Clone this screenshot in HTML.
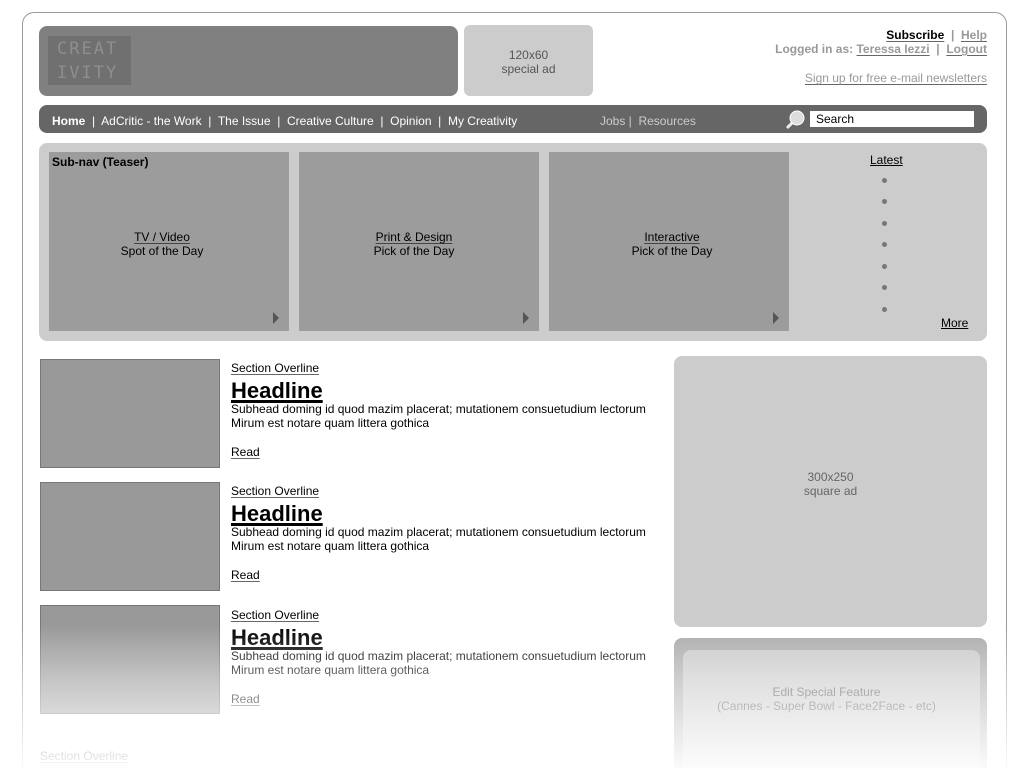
<!DOCTYPE html>
<html><head><meta charset="utf-8"><style>
*{margin:0;padding:0;box-sizing:border-box}
html,body{width:1024px;height:768px;overflow:hidden}
body{background:#fff;font-family:"Liberation Sans",Arial,sans-serif;font-size:12px;color:#000;position:relative}
.a{position:absolute}
.u{text-decoration:underline;text-decoration-color:#666;text-underline-offset:2px}
.frame{left:22px;top:12px;width:985px;height:756px;border:1px solid #999;border-bottom:none;border-radius:12px 12px 0 0}
.logo{left:39px;top:26px;width:419px;height:70px;background:#808080;border-radius:8px}
.logoin{left:48px;top:36px;width:83px;height:49px;background:#707070;font-family:"DejaVu Sans Mono",monospace;color:#8e8e8e;font-size:17px;letter-spacing:2px;line-height:24px;padding:1px 0 0 9px;font-weight:200}
.ad{left:464px;top:25px;width:129px;height:71px;background:#ccc;border-radius:6px;text-align:center;color:#555;padding-top:23px;line-height:14px}
.nav{left:39px;top:105px;width:948px;height:28px;background:#666;border-radius:8px;color:#fff}
.tile{top:152px;width:240px;height:179px;background:#9c9c9c;text-align:center;padding-top:78px;padding-right:14px;line-height:14px}
.tile .u{text-decoration-color:#444}
.arr{position:absolute;right:10px;bottom:7px;width:0;height:0;border-left:6px solid #555;border-top:6px solid transparent;border-bottom:6px solid transparent}
.dot{left:882px;width:5px;height:5px;border-radius:50%;background:#777}
.img{left:40px;width:180px;height:109px;background:#999;border:1px solid #777}
.ov{left:231px;line-height:14px}
.hl{left:231px;font-size:22px;font-weight:bold;text-decoration:underline;text-decoration-thickness:3px;text-underline-offset:2px;line-height:24px}
.sub{left:231px;line-height:14px}
</style></head><body>
<div class="a frame"></div>
<div class="a logo"></div>
<div class="a logoin">CREAT<br>IVITY</div>
<div class="a ad">120x60<br>special ad</div>
<div class="a" style="right:37px;top:28px;text-align:right;line-height:14px;font-weight:bold;color:#999"><span class="u" style="color:#000">Subscribe</span> &nbsp;| &nbsp;<span class="u">Help</span><br>Logged in as: <span class="u">Teressa Iezzi</span> &nbsp;| &nbsp;<span class="u">Logout</span></div>
<div class="a u" style="right:37px;top:71px;color:#999">Sign up for free e-mail newsletters</div>
<div class="a nav">
<div class="a" style="left:13px;top:9px;white-space:pre"><b>Home</b>  |  AdCritic - the Work  |  The Issue  |  Creative Culture  |  Opinion  |  My Creativity</div>
<div class="a" style="left:561px;top:9px;color:#ccc;white-space:pre">Jobs |  Resources</div>
<svg class="a" style="left:745px;top:4px" width="22" height="22"><line x1="3" y1="19" x2="10" y2="12" stroke="#eee" stroke-width="3"/><circle cx="13" cy="9" r="7" fill="#ddd" stroke="#fff"/></svg>
<div class="a" style="left:771px;top:6px;width:164px;height:16px;background:#fff;color:#000;padding:1px 6px;line-height:14px">Search</div>
</div>
<div class="a" style="left:39px;top:143px;width:948px;height:198px;background:#ccc;border-radius:8px"></div>
<div class="a tile" style="left:49px"><span class="u">TV / Video</span><br>Spot of the Day<div class="arr"></div></div>
<div class="a" style="left:52px;top:155px;font-weight:bold">Sub-nav (Teaser)</div>
<div class="a tile" style="left:299px;padding-right:10px"><span class="u">Print &amp; Design</span><br>Pick of the Day<div class="arr"></div></div>
<div class="a tile" style="left:549px;padding-right:0;padding-left:6px"><span class="u">Interactive</span><br>Pick of the Day<div class="arr"></div></div>
<div class="a" style="left:870px;top:153px;text-decoration:underline">Latest</div>
<div class="a dot" style="top:178px"></div><div class="a dot" style="top:199px"></div><div class="a dot" style="top:221px"></div><div class="a dot" style="top:242px"></div><div class="a dot" style="top:264px"></div><div class="a dot" style="top:285px"></div><div class="a dot" style="top:307px"></div>
<div class="a" style="left:941px;top:316px;text-decoration:underline">More</div>

<div class="a img" style="top:359px"></div>
<div class="a ov u" style="top:361px">Section Overline</div>
<div class="a hl" style="top:379px">Headline</div>
<div class="a sub" style="top:402px">Subhead doming id quod mazim placerat; mutationem consuetudium lectorum<br>Mirum est notare quam littera gothica</div>
<div class="a ov u" style="top:445px">Read</div>

<div class="a img" style="top:482px"></div>
<div class="a ov u" style="top:484px">Section Overline</div>
<div class="a hl" style="top:502px">Headline</div>
<div class="a sub" style="top:525px">Subhead doming id quod mazim placerat; mutationem consuetudium lectorum<br>Mirum est notare quam littera gothica</div>
<div class="a ov u" style="top:568px">Read</div>

<div class="a img" style="top:605px"></div>
<div class="a ov u" style="top:608px">Section Overline</div>
<div class="a hl" style="top:626px">Headline</div>
<div class="a sub" style="top:649px">Subhead doming id quod mazim placerat; mutationem consuetudium lectorum<br>Mirum est notare quam littera gothica</div>
<div class="a ov u" style="top:692px">Read</div>
<div class="a ov u" style="left:40px;top:749px">Section Overline</div>

<div class="a" style="left:674px;top:356px;width:313px;height:271px;background:#ccc;border-radius:8px;text-align:center;color:#666;padding-top:114px;line-height:14px">300x250<br>square ad</div>
<div class="a" style="left:674px;top:638px;width:313px;height:130px;background:#aaa;border-radius:8px 8px 0 0"></div>
<div class="a" style="left:683px;top:650px;width:297px;height:118px;background:#c8c8c8;border-radius:8px 8px 0 0;text-align:center;color:#555;padding-top:35px;padding-right:10px;line-height:14px">Edit Special Feature<br>(Cannes - Super Bowl - Face2Face - etc)</div>

<div class="a" style="left:0;top:625px;width:1024px;height:143px;background:linear-gradient(to bottom,rgba(255,255,255,0),rgba(255,255,255,0.45) 40%,rgba(255,255,255,0.95))"></div>
</body></html>
